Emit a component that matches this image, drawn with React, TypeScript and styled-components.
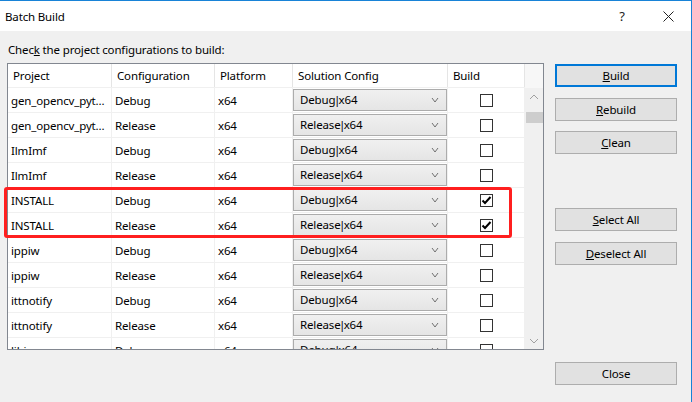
import React from "react";
import styled, { createGlobalStyle } from "styled-components";

const Global = createGlobalStyle`
  html, body { margin: 0; padding: 0; background: #f0f0f0; }
  body { font-family: "Segoe UI", "Noto Sans", sans-serif; font-size: 11.5px; letter-spacing: -0.15px; color: #000; }
  * { box-sizing: border-box; }
`;

const Window = styled.div`
  width: 692px;
  height: 402px;
  border-top: 1px solid #1883d7;
  border-right: 1px solid #1883d7;
  background: #f0f0f0;
  display: flex;
  flex-direction: column;
  overflow: hidden;
`;

const TitleBar = styled.div`
  height: 30px;
  background: #fff;
  display: flex;
  align-items: center;
  padding-left: 5px;
`;

const Title = styled.div`
  flex: 1;
`;

const TitleButton = styled.div`
  width: 46px;
  height: 30px;
  display: flex;
  align-items: center;
  justify-content: center;
  font-size: 13px;
  color: #222;
`;

const Body = styled.div`
  flex: 1;
  display: flex;
  padding: 11px 0 0 7px;
  gap: 11px;
`;

const LeftCol = styled.div`
  width: 537px;
  display: flex;
  flex-direction: column;
`;

const Label = styled.div`
  height: 16px;
  line-height: 16px;
  padding-left: 1px;
  margin-bottom: 5px;
`;

const TableWrap = styled.div`
  position: relative;
`;

const Table = styled.div`
  height: 287px;
  border: 1px solid #828790;
  background: #fff;
  display: flex;
  overflow: hidden;
`;

const Grid = styled.div`
  flex: 1;
  display: flex;
  flex-direction: column;
`;

const cols = "104px 103px 78px 155px 77px";

const HeaderRow = styled.div`
  display: grid;
  grid-template-columns: ${cols};
  height: 24px;
  flex: none;
  border-bottom: 1px solid #f0f0f0;
`;

const HeaderCell = styled.div`
  border-right: 1px solid #e5e5e5;
  padding-left: 5px;
  display: flex;
  align-items: center;
  white-space: nowrap;
  overflow: hidden;
`;

const Row = styled.div`
  display: grid;
  grid-template-columns: ${cols};
  height: 25px;
  flex: none;
  border-bottom: 1px solid #f0f0f0;
`;

const Cell = styled.div<{ $center?: boolean; $pad?: number }>`
  border-right: 1px solid #f0f0f0;
  padding-left: ${(p) => (p.$pad ?? 3)}px;
  display: flex;
  align-items: center;
  justify-content: ${(p) => (p.$center ? "center" : "flex-start")};
  white-space: nowrap;
  overflow: hidden;
  min-width: 0;
`;

const Combo = styled.div`
  width: 154px;
  height: 22px;
  margin-top: -1px;
  border: 1px solid #acacac;
  background: linear-gradient(#f0f0f0, #e5e5e5);
  display: flex;
  align-items: center;
  padding-left: 6px;
  padding-right: 7px;
`;

const ComboText = styled.span`
  flex: 1;
`;

const Pipe = styled.span`
  margin: 0 -1.5px;
`;

const Check = styled.div`
  width: 13px;
  height: 13px;
  border: 1px solid #333;
  background: #fff;
  display: flex;
  align-items: center;
  justify-content: center;
  margin-left: 1px;
`;

const ScrollBar = styled.div`
  width: 18px;
  flex: none;
  background: #f0f0f0;
  display: flex;
  flex-direction: column;
`;

const ScrollHead = styled.div`
  height: 24px;
  background: #f7f7f7;
  flex: none;
`;

const ScrollArrow = styled.div<{ $h: number }>`
  height: ${(p) => p.$h}px;
  display: flex;
  align-items: center;
  justify-content: center;
  flex: none;
`;

const ThumbGap = styled.div`
  height: 7px;
  flex: none;
`;

const Thumb = styled.div`
  height: 11px;
  margin-left: 1px;
  background: #cdcdcd;
  flex: none;
`;

const Spacer = styled.div`
  flex: 1;
`;

const Highlight = styled.div`
  position: absolute;
  left: -3px;
  top: 124px;
  width: 508px;
  height: 51px;
  border: 3px solid #ff1f1f;
  border-radius: 3px;
  pointer-events: none;
`;

const RightCol = styled.div`
  width: 122px;
  display: flex;
  flex-direction: column;
  padding-top: 22px;
`;

const Button = styled.div<{ $default?: boolean; $mt?: number }>`
  height: 23px;
  margin-top: ${(p) => p.$mt ?? 0}px;
  background: #e1e1e1;
  border: ${(p) => (p.$default ? "2px solid #0078d7" : "1px solid #adadad")};
  display: flex;
  align-items: center;
  justify-content: center;
  flex: none;
`;

const U = styled.span`
  text-decoration: underline;
`;

const Chevron = ({ up, color, w = 7 }: { up?: boolean; color: string; w?: number }) => (
  <svg width={w + 2} height={6} viewBox={`0 0 ${w + 2} 6`}>
    <polyline
      points={up ? `1,5 ${(w + 2) / 2},1 ${w + 1},5` : `1,1 ${(w + 2) / 2},5 ${w + 1},1`}
      fill="none"
      stroke={color}
      strokeWidth="1"
    />
  </svg>
);

const CheckMark = () => (
  <svg width="11" height="11" viewBox="0 0 11 11">
    <polyline points="1.5,5.5 4,8 9.5,2" fill="none" stroke="#000" strokeWidth="2" />
  </svg>
);

const rows: [string, string, boolean][] = [
  ["gen_opencv_pyt...", "Debug", false],
  ["gen_opencv_pyt...", "Release", false],
  ["IlmImf", "Debug", false],
  ["IlmImf", "Release", false],
  ["INSTALL", "Debug", true],
  ["INSTALL", "Release", true],
  ["ippiw", "Debug", false],
  ["ippiw", "Release", false],
  ["ittnotify", "Debug", false],
  ["ittnotify", "Release", false],
  ["libjpeg", "Debug", false],
];

export default function App() {
  return (
    <Window>
      <Global />
      <TitleBar>
        <Title>Batch Build</Title>
        <TitleButton>?</TitleButton>
        <TitleButton>
          <svg width="11" height="11" viewBox="0 0 11 11">
            <path d="M0.5,0.5 L10.5,10.5 M10.5,0.5 L0.5,10.5" stroke="#222" strokeWidth="1" />
          </svg>
        </TitleButton>
      </TitleBar>
      <Body>
        <LeftCol>
          <Label>
            Chec<U>k</U> the project configurations to build:
          </Label>
          <TableWrap>
            <Table>
              <Grid>
                <HeaderRow>
                  <HeaderCell>Project</HeaderCell>
                  <HeaderCell>Configuration</HeaderCell>
                  <HeaderCell>Platform</HeaderCell>
                  <HeaderCell>Solution Config</HeaderCell>
                  <HeaderCell>Build</HeaderCell>
                </HeaderRow>
                {rows.map(([proj, cfg, checked], i) => (
                  <Row key={i}>
                    <Cell>{proj}</Cell>
                    <Cell>{cfg}</Cell>
                    <Cell>x64</Cell>
                    <Cell $pad={0}>
                      <Combo>
                        <ComboText>
                          {cfg}
                          <Pipe>|</Pipe>x64
                        </ComboText>
                        <Chevron color="#707070" w={6} />
                      </Combo>
                    </Cell>
                    <Cell $center $pad={0}>
                      <Check>{checked && <CheckMark />}</Check>
                    </Cell>
                  </Row>
                ))}
              </Grid>
              <ScrollBar>
                <ScrollHead />
                <ScrollArrow $h={17}>
                  <Chevron up color="#a0a0a0" w={8} />
                </ScrollArrow>
                <ThumbGap />
                <Thumb />
                <Spacer />
                <ScrollArrow $h={17}>
                  <Chevron color="#a0a0a0" w={8} />
                </ScrollArrow>
              </ScrollBar>
            </Table>
            <Highlight />
          </TableWrap>
        </LeftCol>
        <RightCol>
          <Button $default>
            <span>
              <U>B</U>uild
            </span>
          </Button>
          <Button $mt={11}>
            <span>
              <U>R</U>ebuild
            </span>
          </Button>
          <Button $mt={10}>
            <span>
              <U>C</U>lean
            </span>
          </Button>
          <Button $mt={54}>
            <span>
              <U>S</U>elect All
            </span>
          </Button>
          <Button $mt={11}>
            <span>
              <U>D</U>eselect All
            </span>
          </Button>
          <Button $mt={97}>Close</Button>
        </RightCol>
      </Body>
    </Window>
  );
}
